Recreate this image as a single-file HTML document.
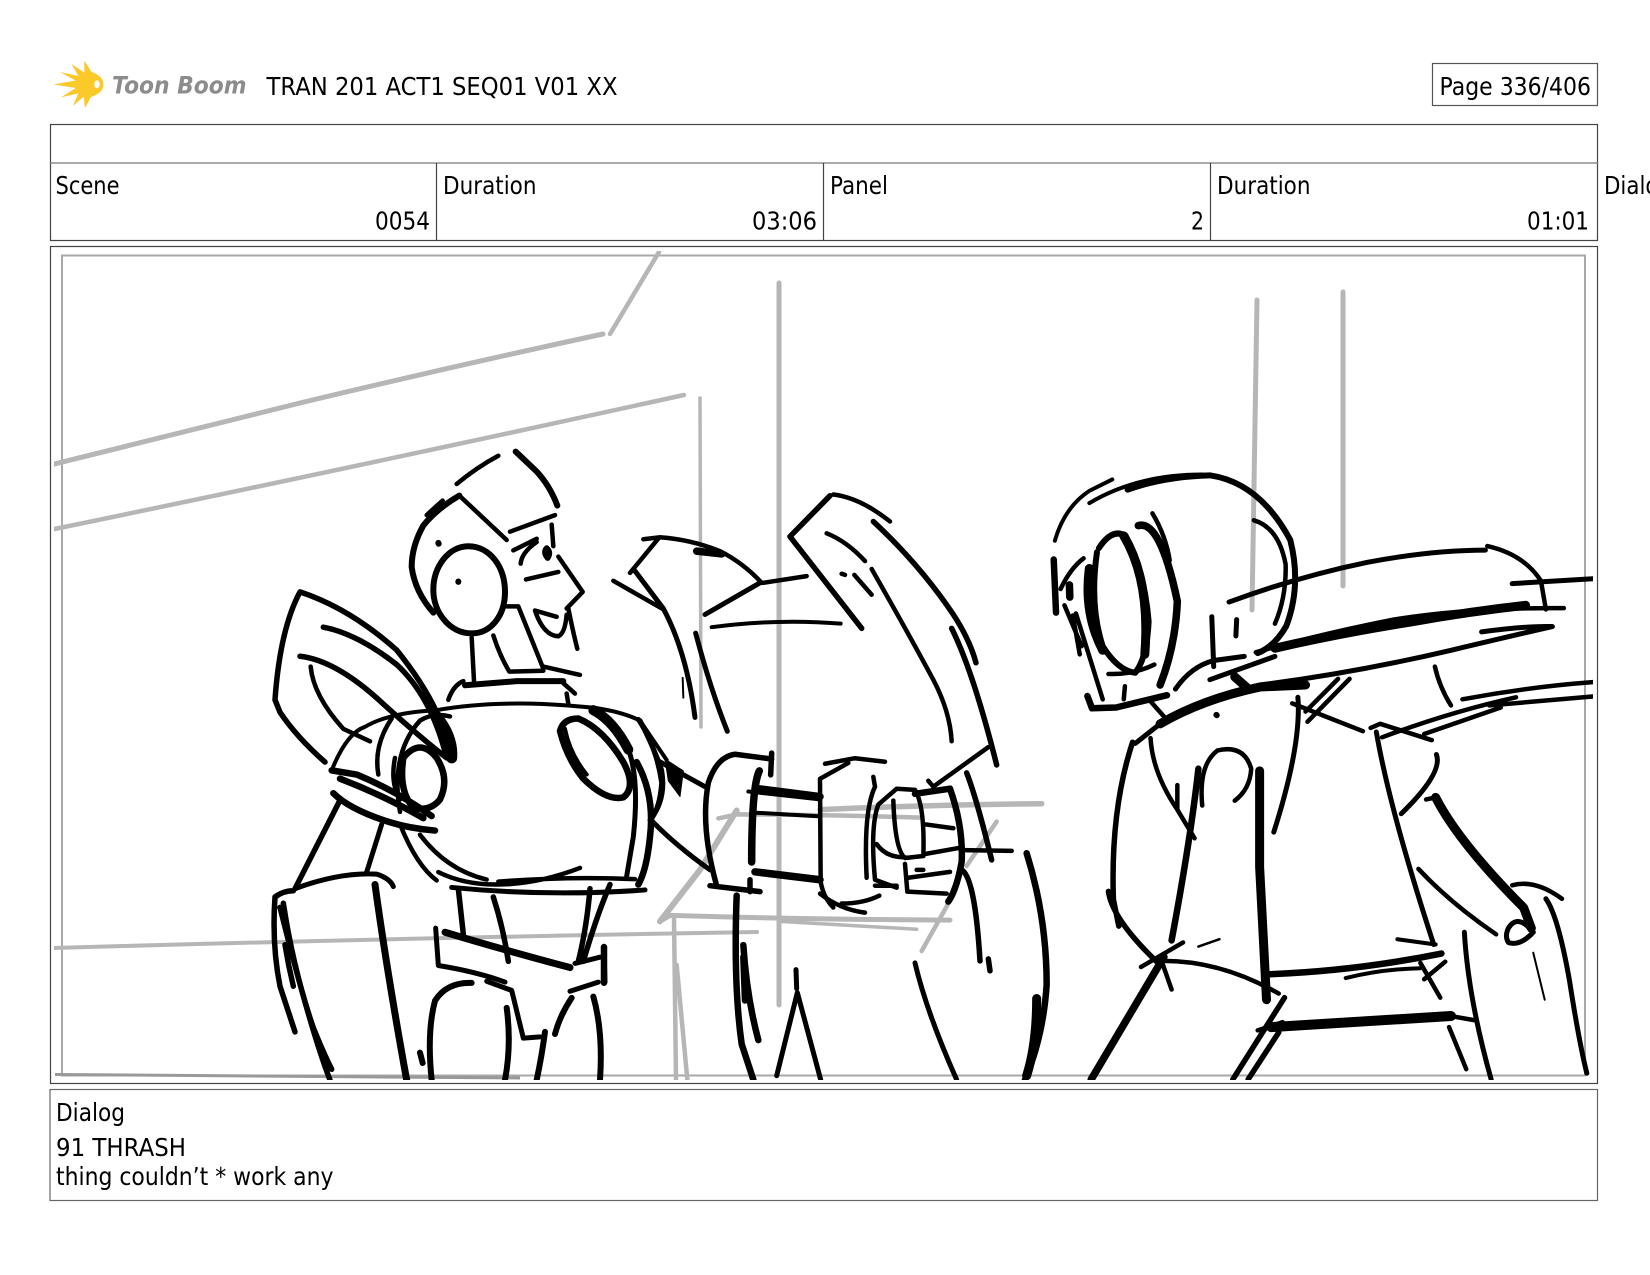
<!DOCTYPE html>
<html><head><meta charset="utf-8"><title>Storyboard page</title>
<style>
html,body{margin:0;padding:0;background:#fff;width:1650px;height:1275px;overflow:hidden}
svg{display:block}
text{font-family:"DejaVu Sans","Liberation Sans",sans-serif;font-size:25px;fill:#000}
.sk path{vector-effect:non-scaling-stroke;fill:none;stroke:#000;stroke-linecap:round;stroke-linejoin:round}
.gr path{vector-effect:non-scaling-stroke;fill:none;stroke:#b6b6b6;stroke-linecap:round;stroke-linejoin:round}
</style></head>
<body>
<svg width="1650" height="1275" viewBox="0 0 1650 1275" xmlns="http://www.w3.org/2000/svg">
<defs><clipPath id="c"><rect x="54" y="251" width="1539" height="829"/></clipPath></defs>
<rect width="1650" height="1275" fill="#fff"/>

<!-- logo -->
<g transform="translate(45,52) scale(.3333)">
<path fill="#fbc92a" d="M140 60L118 26L118 62L80 36L100 72L45 60L92 86L25 97L92 108L48 136L100 124L84 162L116 134L120 168L138 135Q165 125 172 112Q180 97 170 80Q160 66 140 60Z"/>
<ellipse cx="156" cy="97" rx="8" ry="12" fill="#fff"/>
</g>
<text x="112" y="93.5" textLength="134.500" lengthAdjust="spacingAndGlyphs" style="font-family:'DejaVu Sans',sans-serif;font-weight:bold;font-style:italic;font-size:24px;fill:#8c8c8c">Toon Boom</text>
<text x="266.500" y="95" textLength="351" lengthAdjust="spacingAndGlyphs">TRAN 201 ACT1 SEQ01 V01 XX</text>

<rect x="1432.500" y="63.500" width="165" height="42" fill="none" stroke="#555" stroke-width="1.200"/>
<text x="1439.500" y="95" textLength="151.500" lengthAdjust="spacingAndGlyphs">Page 336/406</text>

<!-- header table -->
<g fill="none" stroke="#444" stroke-width="1.200">
<rect x="50.500" y="124.500" width="1547" height="116"/>
<path d="M50 163H1598" stroke="#777"/>
<path d="M436.500 163V240M823.500 163V240M1210.500 163V240"/>
<rect x="50.500" y="246.500" width="1547" height="837"/>
<rect x="50" y="1089.500" width="1547.500" height="111" stroke="#666"/>
</g>
<text x="55.500" y="194" textLength="64" lengthAdjust="spacingAndGlyphs">Scene</text>
<text x="443" y="194" textLength="93.500" lengthAdjust="spacingAndGlyphs">Duration</text>
<text x="830" y="194" textLength="58" lengthAdjust="spacingAndGlyphs">Panel</text>
<text x="1217" y="194" textLength="93.500" lengthAdjust="spacingAndGlyphs">Duration</text>
<text x="1604" y="194" textLength="68" lengthAdjust="spacingAndGlyphs">Dialog</text>
<text x="375" y="229.500" textLength="55" lengthAdjust="spacingAndGlyphs">0054</text>
<text x="752" y="229.500" textLength="65" lengthAdjust="spacingAndGlyphs">03:06</text>
<text x="1191" y="229.500" textLength="13" lengthAdjust="spacingAndGlyphs">2</text>
<text x="1527" y="229.500" textLength="62" lengthAdjust="spacingAndGlyphs">01:01</text>

<!-- dialog -->
<text x="56" y="1121" textLength="69" lengthAdjust="spacingAndGlyphs">Dialog</text>
<text x="56" y="1156" textLength="130" lengthAdjust="spacingAndGlyphs">91 THRASH</text>
<text x="56" y="1185" textLength="277.500" lengthAdjust="spacingAndGlyphs">thing couldn’t * work any</text>

<g clip-path="url(#c)">
<!-- gray layer -->
<rect x="62" y="255.500" width="1523" height="820" fill="none" stroke="#a8a8a8" stroke-width="2"/>
<path d="M55 1074.500L520 1078" stroke="#999" stroke-width="3" fill="none"/>
<g class="gr" stroke-width="4">
<path d="M54.500 464L300 403Q450 367 603 334" stroke-width="5"/>
<path d="M610 334L659 252" stroke-width="4.500"/>
<path d="M54.500 529Q360 466 684 395" stroke-width="4.500"/>
<path d="M700 398L701 727" stroke-width="3.500"/>
<path d="M779 283L779 1005" stroke-width="5"/>
<path d="M1257 300L1252 610" stroke-width="5"/>
<path d="M1343 292L1343 586" stroke-width="5"/>
<path d="M54 948Q400 938 757 932" stroke-width="4"/>
</g>
<g class="gr" transform="translate(600,470) scale(.33333,.3959)">
<path d="M180 1140L300 1010L410 860" stroke-width="6"/>
<path d="M355 880L410 870Q650 870 960 878" stroke-width="4.500"/>
<path d="M660 858Q1000 845 1325 843" stroke-width="5.500"/>
<path d="M180 1140L210 1125Q600 1135 1050 1137" stroke-width="5"/>
<path d="M540 1140Q750 1150 950 1160" stroke-width="3.500"/>
<path d="M222 1130L228 1540M230 1250L262 1540" stroke-width="4.500"/>
<path d="M965 1215L1055 1080M1100 1000L1190 888" stroke-width="4.500"/>
</g>

<!-- character 1 -->
<g class="sk" transform="translate(250,430) scale(.33333,.4151)">
<path stroke-width="4.500" d="M620 130Q680 90 745 62M530 205Q550 190 578 170M780 245L915 205M790 290L860 262M812 322Q815 295 860 270M828 360L925 342M925 305L998 390L950 430M855 435L920 450M855 435Q880 495 925 497Q945 490 950 445M955 430Q970 490 982 527M770 425L805 425M805 425L880 575M730 495Q750 545 778 582L880 580M880 570L990 590M595 650Q610 615 640 605M940 610L975 635M950 635L955 660"/>
<path stroke-width="6" d="M797 52L860 100Q900 135 922 182M628 158Q560 190 520 230Q485 280 485 330Q495 390 550 440M655 280C720 280 765 330 765 390C765 450 720 490 665 490C600 490 550 440 550 385C550 330 595 280 655 280M645 615L800 605L940 605"/>
<path stroke-width="4.500" d="M628 158L770 265M905 228L910 280M665 500L672 605"/>
<path stroke-width="6" d="M565 272L566 274M625 365L625 366M890 285Q880 295 893 308Q903 295 890 285"/>
<path stroke-width="4" d="M245 820Q290 730 345 715Q420 680 560 675Q700 655 880 660Q990 665 1040 670Q1120 680 1170 700M1170 700L1250 795"/>
<path stroke-width="6.500" d="M930 725Q940 695 985 695Q1060 720 1120 800Q1160 860 1120 885Q1070 895 1000 840Q950 790 930 725M1160 800Q1215 880 1200 980Q1190 1060 1165 1095"/>
<path stroke-width="4" d="M945 720Q960 780 1010 830"/>
<path stroke-width="10" d="M1030 675Q1090 700 1135 770"/>
<path stroke-width="5" d="M1130 760Q1170 830 1150 980L1130 1075M1200 940Q1250 890 1235 820Q1220 780 1170 700"/>
<path stroke-width="5.500" d="M75 650Q90 480 150 390Q300 430 440 530Q520 610 560 680Q610 740 605 790M75 650L90 680Q140 740 225 800M220 475Q320 490 440 565Q540 640 585 775M150 545Q260 555 400 660Q510 740 590 790"/>
<path stroke-width="4.500" d="M182 570Q190 640 280 720L360 750M385 830Q370 760 425 695M450 920Q420 780 510 700Q550 680 600 690M435 790Q420 850 450 890"/>
<path stroke-width="11" d="M560 690Q610 740 605 790"/>
<path stroke-width="6.500" d="M460 790Q510 740 560 790Q600 840 570 890Q540 920 490 910Q445 870 460 790M245 820L320 830Q440 870 545 930M270 840Q400 880 520 935M250 875Q300 915 420 945Q480 960 555 965"/>
<path stroke-width="4.500" d="M450 950Q500 1050 560 1085M510 975Q590 1060 710 1083M565 1065Q640 1095 740 1095Q860 1095 990 1055M745 1088Q950 1075 1155 1082"/>
<path stroke-width="5" d="M605 1102Q900 1125 1185 1108M395 950L350 1065M135 1105Q270 1065 380 1070Q420 1080 430 1100"/>
<path stroke-width="5.500" d="M268 895L135 1105M75 1125Q100 1110 130 1110M75 1125Q65 1240 90 1340L135 1450M100 1140Q130 1300 190 1440Q220 1500 245 1540M90 1150Q180 1440 240 1566M105 1240Q115 1290 130 1340"/>
<path stroke-width="7" d="M375 1095Q410 1300 470 1566"/>
<path stroke-width="5.500" d="M625 1105L640 1215M730 1125Q760 1200 775 1280M1020 1105Q1010 1200 985 1280M1080 1095Q1040 1170 1000 1280"/>
<path stroke-width="7" d="M585 1210Q750 1250 960 1295"/>
<path stroke-width="5" d="M557 1200L565 1290Q680 1305 765 1330M710 1328L785 1350L820 1465L870 1462M975 1285L1050 1270M1062 1250L1065 1330M960 1352L1045 1330"/>
<path stroke-width="6" d="M665 1332Q590 1330 555 1375Q530 1450 545 1566M770 1392Q785 1480 765 1566M885 1450Q875 1510 860 1566M965 1368Q930 1410 915 1455M1030 1365Q1060 1450 1050 1566M510 1500L518 1525"/>
</g>

<!-- character 2 -->
<g class="sk" transform="translate(600,470) scale(.33333,.3959)">
<path stroke-width="4.500" d="M90 260L178 170Q270 175 360 205Q430 235 485 285M130 175L178 170M40 280L190 352M490 285L620 268"/>
<path stroke-width="7.500" d="M290 205L365 212"/>
<path stroke-width="5" d="M105 255L190 350Q260 460 285 625M315 365L480 285M287 412Q330 550 382 660"/>
<path stroke-width="4" d="M335 397Q530 375 722 388"/>
<path stroke-width="2" d="M248 525L250 575"/>
<path stroke-width="5.500" d="M690 65L570 168L785 400M820 130Q960 240 1060 365Q1110 430 1128 487M1055 400Q1120 510 1190 745"/>
<path stroke-width="4.500" d="M700 62Q780 70 870 130M815 250Q930 420 1000 530Q1050 610 1055 685M680 160Q740 180 795 230M763 265L815 315M725 262L735 265M1165 700L1000 800M985 785L1000 800"/>
<path stroke-width="5.500" d="M1100 765Q1130 830 1175 985"/>
<path stroke-width="5" d="M175 735L315 800M160 890Q230 950 330 1010M115 630Q170 700 185 790Q180 850 155 880"/>
<path stroke-width="1" style="fill:#000" d="M195 730L250 760L240 825L205 785Z"/>
<path stroke-width="5.500" d="M515 730L405 718Q350 725 325 790Q300 900 350 1050M515 715L512 770M330 1050L480 1065M450 1035L450 1065"/>
<path stroke-width="7.500" d="M478 760Q455 800 455 990M475 805L660 825M465 1015L660 1035"/>
<path stroke-width="4" d="M455 865L660 875M445 812L660 832"/>
<path stroke-width="4.500" d="M675 742L765 728L855 737M660 780L745 740M660 780L662 1040Q670 1080 700 1105M660 1070Q720 1110 795 1118M725 1095Q790 1095 838 1075"/>
<path stroke-width="4.500" d="M820 775L825 800Q790 860 800 1030M835 845Q810 900 825 1035L890 1055M835 845L890 805L945 808Q975 850 970 975L915 980Q885 960 880 835M830 945Q860 980 915 978M915 995L922 1065L1040 1070M925 1030L1050 1015M950 1010L970 1010M825 1050L890 1050M975 895L1060 905M975 970L1075 955M1090 960L1235 962"/>
<path stroke-width="6.500" d="M945 818L1050 805Q1090 900 1085 990Q1070 1060 1045 1090"/>
<path stroke-width="5.500" d="M1085 1010Q1125 1030 1140 1240M1165 1235L1170 1265"/>
<path stroke-width="6.500" d="M410 1075Q400 1300 425 1450L460 1540M430 1200Q440 1330 475 1440M430 1230L435 1340M12 1205L12 1295"/>
<path stroke-width="5" d="M588 1262L590 1310M530 1530L592 1320L662 1540M945 1245Q980 1370 1070 1540"/>
<path stroke-width="6.500" d="M1280 968Q1340 1130 1340 1300Q1330 1430 1275 1540"/>
<path stroke-width="9" d="M1310 1335Q1310 1450 1280 1530"/>
</g>

<!-- character 3 -->
<g class="sk" transform="translate(1030,450) scale(.3827,.4087)">
<path stroke-width="4" d="M65 222Q90 140 155 100L215 72M155 130Q280 60 450 60"/>
<path stroke-width="6" d="M255 97Q350 65 470 62Q600 80 680 220Q710 330 670 430Q640 480 595 497"/>
<path stroke-width="4.500" d="M585 172Q650 190 668 280Q670 360 640 425"/>
<path stroke-width="6" d="M180 240Q215 190 250 210Q300 300 310 420Q305 510 275 545Q230 540 190 480Q155 380 175 250"/>
<path stroke-width="9" d="M245 210Q315 320 300 500M155 290Q140 400 190 490"/>
<path stroke-width="7.500" d="M283 185Q340 170 385 370Q380 480 340 575"/>
<path stroke-width="4.500" d="M320 155Q355 210 365 270M205 548Q270 550 325 525"/>
<path stroke-width="6.500" d="M62 268L68 398M150 602L162 632L225 630L358 600"/>
<path stroke-width="4.500" d="M80 340Q105 290 140 265M112 405L130 500M90 380L135 480M120 400L190 610M248 578L245 610M315 615L350 652"/>
<path stroke-width="7.500" d="M103 330L104 360"/>
<path stroke-width="5" d="M475 408L480 530M540 415L538 455M380 585Q420 530 480 515L560 505M470 562L640 505"/>
<path stroke-width="5" d="M275 718L340 670"/>
<path stroke-width="9" d="M340 670Q450 610 600 580L720 575M535 555L565 580"/>
<path stroke-width="5" d="M520 372Q700 310 880 275Q1050 245 1190 245M1260 327L1470 315"/>
<path stroke-width="4.500" d="M1195 235Q1290 255 1335 320L1348 390"/>
<path stroke-width="4.500" d="M590 495Q760 450 950 415Q1150 385 1395 387"/>
<path stroke-width="9" d="M640 485Q800 450 1000 420Q1150 395 1295 380"/>
<path stroke-width="5" d="M600 575Q850 545 1100 490Q1280 450 1365 432M1180 445Q1300 430 1365 432"/>
<path stroke-width="4.500" d="M1058 530Q1070 580 1100 625M1130 610Q1300 580 1470 568M1200 625L1470 603M920 703Q1100 640 1270 605M1030 695L1230 630"/>
<path stroke-width="4.500" d="M685 620L870 688M835 560L725 665M805 560L720 640M890 680L915 670L1050 710"/>
<path stroke-width="5" d="M700 605Q710 720 637 935M905 690Q940 880 1055 1210M1062 745Q1080 790 970 890"/>
<path stroke-width="5.500" d="M268 715Q210 880 218 1100L232 1165M205 1080Q215 1150 340 1260"/>
<path stroke-width="4.500" d="M315 705Q320 790 385 880L430 950M385 820L385 880M450 870Q440 770 490 735Q560 720 578 780Q575 830 535 858"/>
<path stroke-width="6.500" d="M440 780Q420 950 370 1200"/>
<path stroke-width="9" d="M600 785L600 1020L618 1345"/>
<path stroke-width="4.500" d="M350 1250Q500 1250 650 1330M290 1265L400 1205M340 1240L370 1320"/>
<path stroke-width="7.500" d="M350 1240L160 1540"/>
<path stroke-width="2.500" d="M440 1215L495 1197"/>
<path stroke-width="6.500" d="M618 1283Q850 1275 1075 1232"/>
<path stroke-width="4" d="M825 1292Q920 1270 1020 1268M960 1197L1060 1210"/>
<path stroke-width="4.500" d="M1020 1255L1072 1340M1030 1295L1085 1252M1100 1385L1160 1395M1095 1412L1140 1515"/>
<path stroke-width="10" d="M630 1412L1100 1385"/>
<path stroke-width="4.500" d="M595 1420L660 1400"/>
<path stroke-width="5.500" d="M665 1340L530 1540M650 1425L570 1540"/>
<path stroke-width="9" d="M1060 850Q1120 960 1290 1120L1310 1170"/>
<path stroke-width="4.500" d="M1035 855L1060 850M1015 1025Q1100 1110 1218 1185M1260 1065Q1320 1050 1390 1098"/>
<path stroke-width="5" d="M1250 1170Q1270 1140 1300 1165L1315 1180Q1280 1215 1250 1205Q1240 1190 1250 1170M1348 1098Q1380 1140 1410 1300Q1435 1450 1455 1525M1135 1180Q1145 1340 1205 1540"/>
<path stroke-width="2" d="M1315 1230L1345 1345"/>
<path stroke-width="6" d="M487 648L488 649"/>
</g>
</g>
</svg>
</body></html>
